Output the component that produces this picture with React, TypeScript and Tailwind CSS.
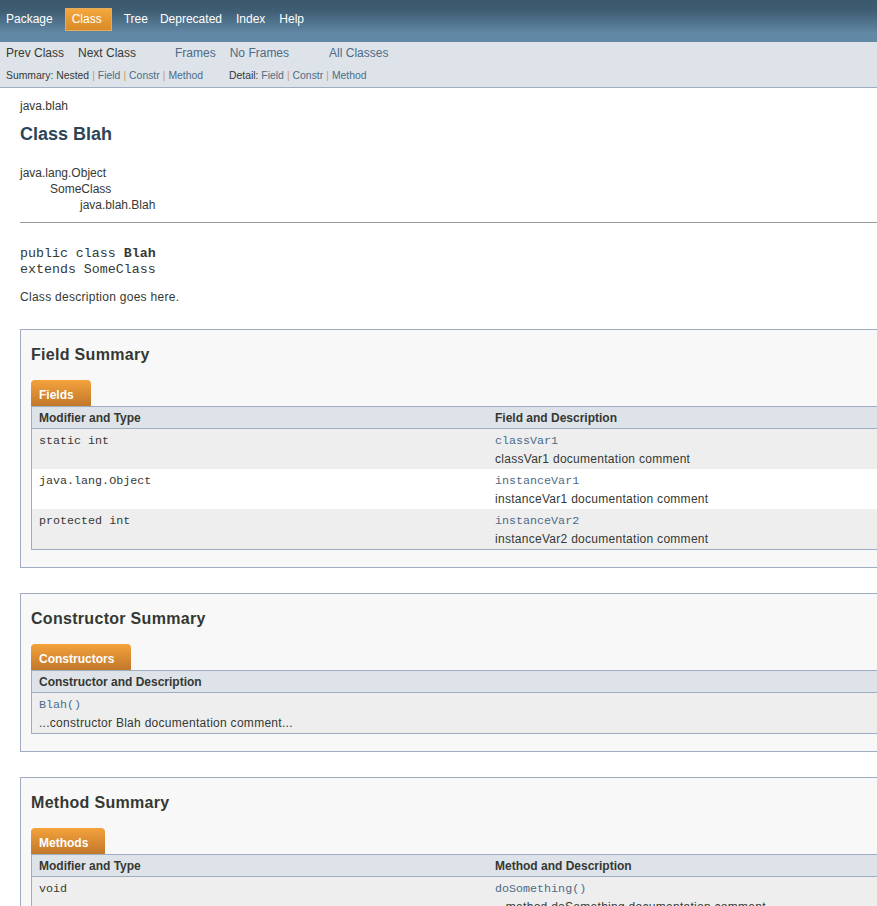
import React from 'react';

const sans = 'font-["Liberation_Sans",Arial,sans-serif]';
const mono = 'font-["Liberation_Mono","Courier_New",monospace]';

type Row = { type?: string; name: string; desc: string };

const fields: Row[] = [
  { type: 'static int', name: 'classVar1', desc: 'classVar1 documentation comment' },
  { type: 'java.lang.Object', name: 'instanceVar1', desc: 'instanceVar1 documentation comment' },
  { type: 'protected int', name: 'instanceVar2', desc: 'instanceVar2 documentation comment' },
];

const methods: Row[] = [
  { type: 'void', name: 'doSomething()', desc: '...method doSomething documentation comment...' },
];

function Sep() {
  return <span className="px-[3px] text-[#c89b5e]">|</span>;
}

function TopNav() {
  const items = [
    { label: 'Tree', ml: 'ml-[12px]' },
    { label: 'Deprecated', ml: 'ml-[12px]' },
    { label: 'Index', ml: 'ml-[14px]' },
    { label: 'Help', ml: 'ml-[14px]' },
  ];
  return (
    <div className="flex h-[42px] items-start bg-[linear-gradient(to_bottom,#3b586d_0%,#3f5d73_25%,#6188a5_80%,#6188a5_100%)] pt-[8px] pl-[6px] text-[12px] leading-[21px] text-white">
      <span className="pt-[1px]">Package</span>
      <span className="ml-[12px] flex h-[23px] w-[47px] items-center border border-[#e0ae5c] bg-[linear-gradient(to_bottom,#f5a83e,#d98a25)] pl-[6px]">
        Class
      </span>
      {items.map((item) => (
        <span key={item.label} className={`${item.ml} pt-[1px]`}>
          {item.label}
        </span>
      ))}
    </div>
  );
}

function SubNav() {
  return (
    <div className="h-[46px] border-b border-[#9eadc0] bg-[#dee3e9] text-[#353833]">
      <div className="flex h-[19px] items-end pl-[6px] text-[12px] leading-[16px]">
        <span>Prev Class</span>
        <span className="ml-[14px]">Next Class</span>
        <span className="ml-[39px] text-[#4c6b87]">Frames</span>
        <span className="ml-[14px] text-[#4c6b87]">No Frames</span>
        <span className="ml-[40px] text-[#4c6b87]">All Classes</span>
      </div>
      <div className="mt-[8px] flex pl-[6px] text-[10.4px] leading-[14px]">
        <div className="w-[223px]">
          Summary: Nested<Sep />
          <span className="text-[#4c6b87]">Field</span>
          <Sep />
          <span className="text-[#4c6b87]">Constr</span>
          <Sep />
          <span className="text-[#4c6b87]">Method</span>
        </div>
        <div>
          Detail: <span className="text-[#4c6b87]">Field</span>
          <Sep />
          <span className="text-[#4c6b87]">Constr</span>
          <Sep />
          <span className="text-[#4c6b87]">Method</span>
        </div>
      </div>
    </div>
  );
}

function SummaryBlock({
  title,
  tab,
  headers,
  rows,
  className,
}: {
  title: string;
  tab: string;
  headers: string[];
  rows: Row[];
  className?: string;
}) {
  const twoCol = headers.length === 2;
  return (
    <div className={`border border-[#9eadc0] bg-[#f8f8f8] px-[10px] pt-[15px] pb-[17px] ${className ?? ''}`}>
      <h3 className="text-[16px] leading-[20px] font-bold tracking-[0.3px] text-[#353833]">{title}</h3>
      <div className="mt-[15px] flex">
        <span className="h-[26px] rounded-t-[4px] bg-[linear-gradient(to_bottom,#f4a23c,#c1782a)] pt-[8px] pr-[17px] pl-[8px] text-[12px] leading-[14px] font-bold text-white">
          {tab}
        </span>
      </div>
      <div className="border border-[#9eadc0] text-[12px] text-[#353833]">
        <div className="flex h-[22px] items-center border-b border-[#9eadc0] bg-[#dee3e9] font-bold">
          {twoCol && <div className="w-[456px] pl-[7px]">{headers[0]}</div>}
          <div className="pl-[7px]">{headers[headers.length - 1]}</div>
        </div>
        {rows.map((row, i) => (
          <div key={row.name} className={`flex h-[40px] pt-[2px] leading-[19px] ${i % 2 === 0 ? 'bg-[#eeeeef]' : 'bg-white'}`}>
            {twoCol && <div className={`w-[456px] pt-[1px] pl-[7px] text-[11.7px] ${mono}`}>{row.type}</div>}
            <div className="pl-[7px]">
              <div className={`${mono} pt-[1px] text-[11.7px] leading-[18px] text-[#4c6b87]`}>{row.name}</div>
              <div className="tracking-[0.28px]">{row.desc}</div>
            </div>
          </div>
        ))}
      </div>
    </div>
  );
}

export default function App() {
  return (
    <div className={`min-h-screen w-full overflow-hidden bg-white ${sans}`}>
      <div className="w-[1150px]">
        <TopNav />
        <SubNav />
        <div className="pt-[11px] pl-[20px] text-[12px] text-[#353833]">
          <div className="leading-[14px]">java.blah</div>
          <h2 className="mt-[10px] text-[18px] leading-[22px] font-bold text-[#2c4557]">Class Blah</h2>
          <div className="mt-[20px] leading-[16px]">
            <div>java.lang.Object</div>
            <div className="pl-[30px]">SomeClass</div>
            <div className="pl-[60px]">java.blah.Blah</div>
          </div>
          <div className="mt-[9px] border-t border-[#9a9a9a]" />
          <pre className={`mt-[23px] text-[13.3px] leading-[16px] ${mono}`}>
            public class <b>Blah</b>
            {'\n'}extends SomeClass
          </pre>
          <p className="mt-[11px] leading-[16px] tracking-[0.28px]">Class description goes here.</p>

          <SummaryBlock
            className="mt-[24px]"
            title="Field Summary"
            tab="Fields"
            headers={['Modifier and Type', 'Field and Description']}
            rows={fields}
          />
          <SummaryBlock
            className="mt-[25px]"
            title="Constructor Summary"
            tab="Constructors"
            headers={['Constructor and Description']}
            rows={[{ name: 'Blah()', desc: '...constructor Blah documentation comment...' }]}
          />
          <SummaryBlock
            className="mt-[25px]"
            title="Method Summary"
            tab="Methods"
            headers={['Modifier and Type', 'Method and Description']}
            rows={methods}
          />
        </div>
      </div>
    </div>
  );
}
